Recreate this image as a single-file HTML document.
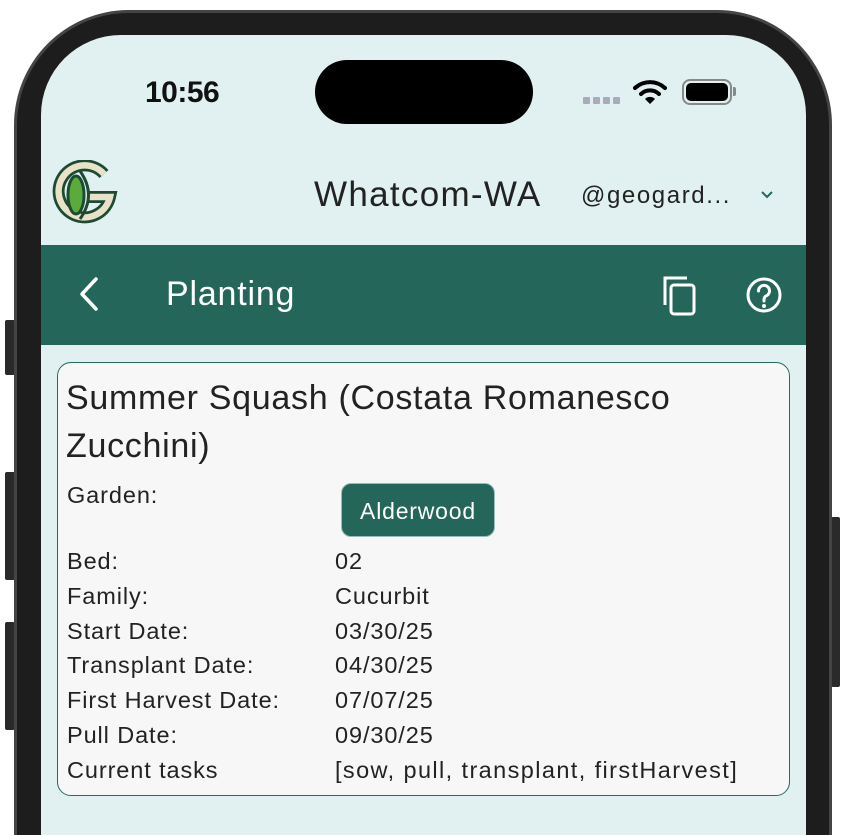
<!DOCTYPE html>
<html><head><meta charset="utf-8"><style>
*{margin:0;padding:0;box-sizing:border-box}
html{width:853px;height:835px;overflow:hidden}
body{width:853px;height:835px;background:#fff;position:relative;overflow:hidden;font-family:"Liberation Sans",sans-serif}
.frame{position:absolute;left:14px;top:10px;width:818px;height:825px;background:#1d1d1d;border-radius:115px 115px 0 0;border:3px solid #444;border-bottom:none}
.btn{position:absolute;background:#2a2a2a;border-radius:2px}
.screen{position:absolute;left:41px;top:35px;width:765px;height:800px;background:#e1f1f1;border-radius:80px 80px 0 0;overflow:hidden}
.abs{position:absolute}
.time{left:104px;top:41px;font-size:30px;font-weight:bold;color:#111;letter-spacing:-0.5px}
.island{left:274px;top:25px;width:218px;height:64px;background:#000;border-radius:32px}
.appbar{left:0;top:210px;width:765px;height:100px;background:#246659}
.card{left:16px;top:327px;width:733px;height:434px;background:#f7f7f7;border:1.5px solid #2a6a5c;border-radius:14px}
.row{position:absolute;left:9px;font-size:23.5px;color:#222;letter-spacing:0.9px}
.val{position:absolute;left:268px}
</style></head><body>
<div class="btn" style="left:5px;top:320px;width:10px;height:55px"></div>
<div class="btn" style="left:5px;top:472px;width:10px;height:108px"></div>
<div class="btn" style="left:5px;top:622px;width:10px;height:108px"></div>
<div class="btn" style="left:831px;top:517px;width:9px;height:170px"></div>
<div class="frame"></div>
<div class="screen">
  <div class="abs time">10:56</div>
  <div class="abs island"></div>
  <div class="abs" style="left:542px;top:62px;display:flex;gap:3px">
    <span style="width:7px;height:7px;background:#aab;border-radius:1px"></span><span style="width:7px;height:7px;background:#aab;border-radius:1px"></span><span style="width:7px;height:7px;background:#aab;border-radius:1px"></span><span style="width:7px;height:7px;background:#aab;border-radius:1px"></span>
  </div>
  <svg class="abs" style="left:592px;top:44px" width="34" height="26" viewBox="0 0 34 26">
    <path d="M2 9 A22 22 0 0 1 32 9" stroke="#000" stroke-width="4" fill="none" stroke-linecap="round"/>
    <path d="M8 15 A13 13 0 0 1 26 15" stroke="#000" stroke-width="4" fill="none" stroke-linecap="round"/>
    <path d="M12 20 L17 25 L22 20 A7 7 0 0 0 12 20Z" fill="#000"/>
  </svg>
  <div class="abs" style="left:641px;top:44px;width:50px;height:26px;border:2px solid #888;border-radius:8px;padding:2px"><div style="width:100%;height:100%;background:#000;border-radius:5px"></div></div>
  <div class="abs" style="left:692px;top:52px;width:3px;height:9px;background:#888;border-radius:0 2px 2px 0"></div>

  <svg class="abs" style="left:11px;top:125px" width="66" height="68" viewBox="0 0 66 68">
    <path d="M52 14 A26 26 0 1 0 58 37 L36 37" fill="none" stroke="#1d4a33" stroke-width="12" stroke-linejoin="miter"/>
    <path d="M52 14 A26 26 0 1 0 58 37 L36 37" fill="none" stroke="#e9e2c8" stroke-width="6.5" stroke-linejoin="miter"/>
    <ellipse cx="24" cy="35" rx="8" ry="19" fill="#5aab3c" stroke="#1d4a33" stroke-width="3"/>
    <path d="M28 11 Q45 35 28 59" fill="none" stroke="#1d4a33" stroke-width="3"/>
  </svg>
  <div class="abs" style="left:273px;top:140px;font-size:35px;color:#222;letter-spacing:1.3px">Whatcom-WA</div>
  <div class="abs" style="left:540px;top:147px;font-size:24px;color:#222;letter-spacing:1.6px">@geogard...</div>
  <svg class="abs" style="left:719px;top:155px" width="14" height="10" viewBox="0 0 14 10"><path d="M2 2 L7 7 L12 2" stroke="#246659" stroke-width="2" fill="none"/></svg>

  <div class="abs appbar">
    <svg class="abs" style="left:36px;top:31px" width="24" height="36" viewBox="0 0 24 36"><path d="M19 3 L5 18 L19 33" stroke="#fff" stroke-width="3.5" fill="none" stroke-linecap="round" stroke-linejoin="round"/></svg>
    <div class="abs" style="left:125px;top:30px;font-size:34px;color:#fff;letter-spacing:0.8px">Planting</div>
    <svg class="abs" style="left:620px;top:30px" width="40" height="42" viewBox="0 0 40 42"><path d="M4 30 V3 H26" stroke="#fff" stroke-width="3" fill="none"/><rect x="10" y="10" width="23" height="29" rx="3" stroke="#fff" stroke-width="3" fill="none"/></svg>
    <svg class="abs" style="left:704px;top:31px" width="38" height="38" viewBox="0 0 38 38"><circle cx="19" cy="19" r="16" stroke="#fff" stroke-width="3" fill="none"/><path d="M13.5 15 A5.5 5.5 0 1 1 21 20 Q19 21 19 24 V25" stroke="#fff" stroke-width="3" fill="none" stroke-linecap="round"/><circle cx="19" cy="30" r="2" fill="#fff"/></svg>
  </div>

  <div class="abs card">
    <div class="abs" style="left:8px;top:11px;font-size:34px;line-height:48px;color:#222;width:720px;letter-spacing:0.7px">Summer Squash (Costata Romanesco<br>Zucchini)</div>
    <div class="row" style="top:119px">Garden:</div>
    <div class="abs" style="left:283px;top:120px;width:154px;height:54px;background:#246659;border-radius:10px;color:#fff;font-size:23px;text-align:center;line-height:54px;letter-spacing:0.8px;border:1px solid #9bb">Alderwood</div>
    <div class="row" style="top:185px">Bed:<span class="val">02</span></div>
    <div class="row" style="top:220px">Family:<span class="val">Cucurbit</span></div>
    <div class="row" style="top:255px">Start Date:<span class="val">03/30/25</span></div>
    <div class="row" style="top:289px">Transplant Date:<span class="val">04/30/25</span></div>
    <div class="row" style="top:324px">First Harvest Date:<span class="val">07/07/25</span></div>
    <div class="row" style="top:359px">Pull Date:<span class="val">09/30/25</span></div>
    <div class="row" style="top:394px">Current tasks<span class="val" style="white-space:nowrap;letter-spacing:1.4px">[sow, pull, transplant, firstHarvest]</span></div>
  </div>
</div>
</body></html>
